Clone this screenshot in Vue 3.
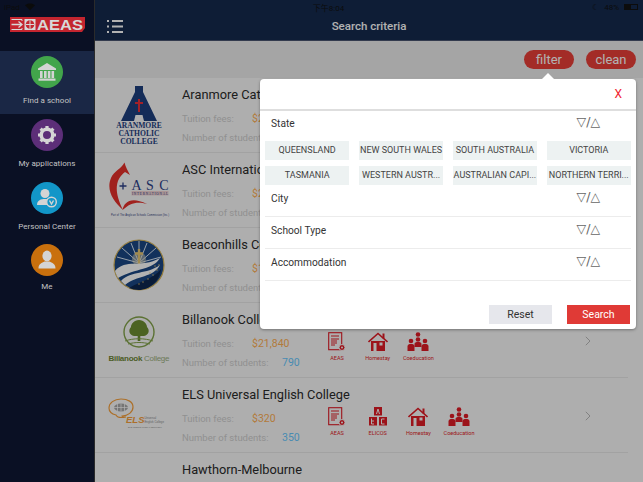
<script setup>
const nav = [
  { label: 'Find a school', color: '#42a54b', icon: 'bank', active: true },
  { label: 'My applications', color: '#5c2e78', icon: 'gear' },
  { label: 'Personal Center', color: '#1296c8', icon: 'person' },
  { label: 'Me', color: '#c9700d', icon: 'me', tight: true }
]
const schools = [
  { name: 'Aranmore Catholic College', logo: 'aranmore', fee: '$21,000', students: '1200', tags: ['AEAS', 'Homestay', 'Coeducation'] },
  { name: 'ASC International', logo: 'asc', fee: '$25,000', students: '640', tags: ['AEAS', 'Homestay', 'Coeducation'] },
  { name: 'Beaconhills College', logo: 'beacon', fee: '$18,500', students: '2900', tags: ['AEAS', 'Homestay', 'Coeducation'] },
  { name: 'Billanook College', logo: 'billanook', fee: '$21,840', students: '790', tags: ['AEAS', 'Homestay', 'Coeducation'] },
  { name: 'ELS Universal English College', logo: 'els', fee: '$320', students: '350', tags: ['AEAS', 'ELICOS', 'Homestay', 'Coeducation'] },
  { name: 'Hawthorn-Melbourne', logo: '', fee: '', students: '', tags: [] }
]
const states = ['QUEENSLAND', 'NEW SOUTH WALES', 'SOUTH AUSTRALIA', 'VICTORIA', 'TASMANIA', 'WESTERN AUSTR...', 'AUSTRALIAN CAPI...', 'NORTHERN TERRI...']
const criteria = ['City', 'School Type', 'Accommodation']
const dots = [[30, 43], [35, 40], [40, 36], [44, 31], [46, 26], [26, 45], [37, 34], [42, 27]]
</script>

<template>
  <div class="app">
    <aside class="side">
      <div class="brand">
        <svg width="75" height="15" viewBox="0 0 75 15">
          <path d="M0 0H75V11L72 15H0Z" fill="#c4252f" />
          <path d="M1.500 7.500H11M8.500 4.500L12 7.500L8.500 10.500" stroke="#d8d8d8" fill="none" stroke-width="1.300" />
          <path d="M1.500 2.500H12V4M1.500 12.500H12V11" stroke="#d8d8d8" fill="none" stroke-width="1" />
          <rect x="14.500" y="2" width="11" height="11" fill="#d8d8d8" />
          <circle cx="20" cy="7.500" r="4.300" fill="#c4252f" />
          <path d="M20 3.200V11.800M15.700 7.500H24.300" stroke="#d8d8d8" stroke-width="1" />
          <text x="27" y="12.800" class="brand-text" textLength="46" lengthAdjust="spacingAndGlyphs">AEAS</text>
        </svg>
      </div>
      <nav class="nav">
        <div v-for="n in nav" :key="n.label" class="nav-item" :class="{ active: n.active, tight: n.tight }">
          <div class="circle" :style="{ background: n.color }">
            <svg v-if="n.icon === 'bank'" width="20" height="20" viewBox="0 0 20 20" fill="#d4d4d4">
              <path d="M10 1L19 6.500V8H1V6.500Z" />
              <rect x="3" y="9" width="2.600" height="7" />
              <rect x="7" y="9" width="2.600" height="7" />
              <rect x="10.800" y="9" width="2.600" height="7" />
              <rect x="14.500" y="9" width="2.600" height="7" />
              <rect x="1.500" y="16.500" width="17" height="2.200" />
            </svg>
            <svg v-else-if="n.icon === 'gear'" width="20" height="20" viewBox="0 0 20 20">
              <circle cx="10" cy="10" r="5.800" fill="none" stroke="#d4d4d4" stroke-width="3.600" />
              <path d="M10 1V4M10 16V19M1 10H4M16 10H19M3.600 3.600L5.800 5.800M14.200 14.200L16.400 16.400M16.400 3.600L14.200 5.800M5.800 14.200L3.600 16.400" stroke="#d4d4d4" stroke-width="3.200" />
            </svg>
            <svg v-else-if="n.icon === 'person'" width="22" height="22" viewBox="0 0 22 22">
              <circle cx="9" cy="6.500" r="4.500" fill="#d4d4d4" />
              <path d="M1 18C1 13 5 12 9 12C11 12 12 12.500 12 13L12 18Z" fill="#d4d4d4" />
              <circle cx="15.500" cy="15" r="4.800" fill="#1296c8" stroke="#d4d4d4" stroke-width="1.400" />
              <path d="M13.500 13.500L15.500 17L17.500 13.500" fill="none" stroke="#d4d4d4" stroke-width="1.400" />
            </svg>
            <svg v-else width="20" height="20" viewBox="0 0 20 20" fill="#d4d4d4">
              <ellipse cx="10" cy="6" rx="4.600" ry="5.400" />
              <path d="M1.500 18.500C1.500 13.500 5 13 7.500 11.500H12.500C15 13 18.500 13.500 18.500 18.500Z" />
            </svg>
          </div>
          <span class="nav-label">{{ n.label }}</span>
        </div>
      </nav>
    </aside>

    <main class="main">
      <header class="top">
        <svg class="menu" width="16" height="14" viewBox="0 0 16 14" fill="#fff">
          <rect x="0" y="1" width="2" height="2" />
          <rect x="0" y="6.500" width="2" height="2" />
          <rect x="0" y="12" width="2" height="2" />
          <rect x="5" y="1" width="11" height="2" />
          <rect x="5" y="6.500" width="11" height="2" />
          <rect x="5" y="12" width="11" height="2" />
        </svg>
        <h1 class="title">Search criteria</h1>
      </header>
      <div class="actions">
        <span class="pill">filter</span>
        <span class="pill">clean</span>
      </div>
      <section class="list">
        <article v-for="s in schools" :key="s.name" class="row">
          <div class="logo">
            <svg v-if="s.logo === 'aranmore'" width="56" height="62" viewBox="0 0 56 62">
              <path d="M24 2H32V8L46 37H33L31.500 31H24.500L23 37H10L24 8Z" fill="#1e3f7f" />
              <rect x="23.500" y="15" width="9" height="16" fill="#1e3f7f" />
              <path d="M28 15V28M24 19H32" stroke="#e8303a" stroke-width="2" />
              <text x="28" y="44" class="serif">ARANMORE</text>
              <text x="28" y="52" class="serif">CATHOLIC</text>
              <text x="28" y="60" class="serif">COLLEGE</text>
            </svg>
            <svg v-else-if="s.logo === 'asc'" width="64" height="60" viewBox="0 0 64 60">
              <path d="M17.500 2.500C18.500 7 21 11 23 15L18 12C9 19 6 30 16 50C6 41 -1 30 4 18C7 11 14 9 17.500 2.500Z" fill="#e5302a" />
              <path d="M15.500 50C17 42 24 36 40 44C30 41 23 43 15.500 50Z" fill="#e5302a" />
              <path d="M12.500 26H19.500M16 22.500V29.500" stroke="#2c3f88" stroke-width="1.300" />
              <text x="24.500" y="29.500" class="asc" textLength="37">A S C</text>
              <rect x="24.500" y="31" width="37" height="4.500" fill="#f4d5d5" />
              <text x="43" y="34.800" class="asc-sub" textLength="36">INTERNATIONAL</text>
              <text x="33" y="55.500" class="asc-foot" textLength="58">Part of The Anglican Schools Commission (Inc.)</text>
            </svg>
            <svg v-else-if="s.logo === 'beacon'" width="52" height="52" viewBox="0 0 52 52">
              <circle cx="26" cy="26" r="25" fill="#1a4784" stroke="#d6b45a" stroke-width="1.200" />
              <path d="M26 24L4 18M26 24L9 9M26 24L18 4M26 24L26 2M26 24L34 4M26 24L43 9M26 24L48 18" stroke="#d7e4f2" stroke-width="1" />
              <circle cx="26" cy="20" r="7" fill="#e9dfc0" opacity=".5" />
              <path d="M26 10V25M22 14.500H30" stroke="#e6c673" stroke-width="2.400" />
              <path d="M2 32C13 19 27 30 47 19C40 31 23 29 5 39C4 37 3 35 2 32Z" fill="#fff" />
              <path d="M8 42C19 31 33 36 47 26C40 39 24 36 12 46Z" fill="#fff" />
              <path d="M16 49C28 42 40 40 48 30C47 42 36 51 26 51C22 51 19 50 16 49Z" fill="#0e2750" />
              <circle v-for="(d, i) in dots" :key="i" :cx="d[0]" :cy="d[1]" r=".7" fill="#e6c673" />
            </svg>
            <svg v-else-if="s.logo === 'billanook'" width="64" height="48" viewBox="0 0 64 48">
              <circle cx="32" cy="16" r="15" fill="none" stroke="#83a34a" stroke-width="1.400" />
              <path d="M32 4C37 4 40 8 40 11C43 14 42 19 37 20H27C22 19 21 14 24 11C24 8 27 4 32 4Z" fill="#6d8f31" />
              <rect x="30.700" y="18" width="2.600" height="7" fill="#6d8f31" />
              <path d="M18 25C26 22 38 22 46 25M21 28C28 26 36 26 43 28" stroke="#83a34a" fill="none" />
              <text x="32" y="45" class="bill" textLength="61">Billanook <tspan class="bill-b">College</tspan></text>
            </svg>
            <svg v-else-if="s.logo === 'els'" width="62" height="34" viewBox="0 0 62 34">
              <path d="M13 1C6 1 1 5 1 10C1 14 4 16 8 17C9 19 13 20 18 19C14 19 14 18 14 18C20 18 25 14 25 9C25 4 20 1 13 1Z" fill="none" stroke="#f6a03b" stroke-width="1.200" />
              <ellipse cx="13" cy="9.500" rx="7" ry="4" fill="#a8a8a8" />
              <path d="M6 9.500H20M13 5.500V13.500M9.500 6V13M16.500 6V13" stroke="#fff" stroke-width=".7" />
              <text x="18" y="25" class="els">ELS</text>
              <text x="36.500" y="21" class="els-sub">Universal</text>
              <text x="36.500" y="24.800" class="els-sub">English College</text>
              <text x="37" y="29.500" class="els-sub mid">ELS INTERNATIONAL NETWORK</text>
            </svg>
          </div>
          <div class="info">
            <h2 class="name">{{ s.name }}</h2>
            <template v-if="s.logo">
              <div class="meta first"><span class="key fee-key">Tuition fees:</span><span class="fee">{{ s.fee }}</span></div>
              <div class="meta"><span class="key num-key">Number of students:</span><span class="num">{{ s.students }}</span></div>
            </template>
          </div>
          <div v-if="s.logo" class="tags">
            <div v-for="t in s.tags" :key="t" class="tag">
              <svg v-if="t === 'AEAS'" width="18" height="20" viewBox="0 0 18 20">
                <rect x=".7" y=".7" width="13" height="17" fill="none" stroke="#e01c26" stroke-width="1.100" />
                <path d="M3 4H11M3 7H11M3 9H9M3 11H9M3 13H7" stroke="#e01c26" />
                <circle cx="14" cy="15.500" r="3" fill="#e01c26" stroke="#fafafa" />
                <circle cx="14" cy="15.500" r="1" fill="#fafafa" />
              </svg>
              <svg v-else-if="t === 'ELICOS'" width="20" height="20" viewBox="0 0 20 20">
                <rect x="6" y="0" width="8" height="8.500" fill="#e01c26" />
                <rect x="1" y="10" width="8" height="8.500" fill="#e01c26" />
                <rect x="11" y="10" width="8" height="8.500" fill="#e01c26" />
                <path d="M8.500 7L10 2L11.500 7M3.500 11.500V17H6M3.500 14H6M16.500 12H13.500V17H16.500" fill="none" stroke="#fafafa" />
              </svg>
              <svg v-else-if="t === 'Homestay'" width="20" height="20" viewBox="0 0 20 20">
                <path d="M3 9H17V19H3Z" fill="#e01c26" />
                <path d="M0.500 10L10 1.500L19.500 10" fill="none" stroke="#e01c26" stroke-width="1.600" />
                <rect x="14.500" y="1.500" width="2" height="5" fill="#e01c26" />
                <rect x="5.500" y="11" width="3" height="8" fill="#fafafa" />
                <rect x="11.500" y="10.500" width="3" height="3" fill="#fafafa" />
              </svg>
              <svg v-else width="22" height="20" viewBox="0 0 22 20" fill="#e01c26">
                <circle cx="11" cy="2.500" r="2.300" />
                <circle cx="4" cy="9" r="2.300" />
                <circle cx="11" cy="7.500" r="2.300" />
                <circle cx="18" cy="9" r="2.300" />
                <path d="M7.500 15V12C7.500 10.500 9 10 11 10C13 10 14.500 10.500 14.500 12V15Z" />
                <path d="M0.500 19V14.500C0.500 12.500 2 12 4 12C6 12 7.500 12.500 7.500 14.500V19Z" />
                <path d="M14.500 19V14.500C14.500 12.500 16 12 18 12C20 12 21.500 12.500 21.500 14.500V19Z" />
              </svg>
              <span class="tag-label">{{ t }}</span>
            </div>
          </div>
          <svg v-if="s.logo" class="chev" width="6" height="10" viewBox="0 0 6 10">
            <path d="M.8.800L5 5L.8 9.200" fill="none" stroke="#b9b9b9" stroke-width="1" />
          </svg>
        </article>
      </section>
    </main>

    <div class="dim"></div>

    <div class="status">
      <span>iPad</span>
      <svg width="10" height="8" viewBox="0 0 12 9">
        <path d="M6 8.500L0 2.500C3.500-.5 8.500-.5 12 2.500Z" fill="#0b0b0b" />
      </svg>
      <span class="clock">下午8:04</span>
      <span class="moon">☾</span>
      <span>48%</span>
      <span class="battery"><i></i></span>
    </div>

    <div class="modal">
      <span class="caret"></span>
      <div class="modal-head"><span class="close">X</span></div>
      <div class="modal-body">
        <div class="crit first">
          <span>State</span>
          <span class="arrows">▽/△</span>
        </div>
        <div class="chips">
          <span v-for="st in states" :key="st" class="chip">{{ st }}</span>
        </div>
        <div v-for="c in criteria" :key="c" class="crit">
          <span>{{ c }}</span>
          <span class="arrows">▽/△</span>
        </div>
      </div>
      <div class="modal-foot">
        <button class="btn reset">Reset</button>
        <button class="btn search">Search</button>
      </div>
    </div>
  </div>
</template>

<style>
html, body { margin: 0; padding: 0; }
</style>

<style scoped>
.app {
  position: relative;
  display: flex;
  width: 643px;
  height: 482px;
  overflow: hidden;
  font-family: Roboto, "Noto Sans CJK SC", sans-serif;
  background: #fafafa;
}
.side {
  position: relative;
  z-index: 1;
  flex: 0 0 94px;
  background: #0a1024;
  border-right: 1px solid #2b2b2b;
}
.brand {
  height: 51px;
  padding: 17px 0 0 10px;
  box-sizing: border-box;
}
.brand svg { display: block; }
.brand-text {
  font: 700 14px "Liberation Sans", sans-serif;
  fill: #d8d8d8;
}
.nav-item {
  height: 63px;
  padding-top: 5px;
  box-sizing: border-box;
  display: flex;
  flex-direction: column;
  align-items: center;
}
.nav-item.active { background: #1a2745; }
.nav-item.tight { padding-top: 4px; }
.circle {
  width: 32px;
  height: 32px;
  flex: none;
  border-radius: 50%;
  display: flex;
  align-items: center;
  justify-content: center;
}
.nav-label {
  margin-top: 7px;
  font-size: 8px;
  letter-spacing: .05px;
  line-height: 12px;
  color: #c4c4c4;
  white-space: nowrap;
}
.tight .nav-label { margin-top: 5px; }
.main {
  flex: 1;
  min-width: 0;
  display: flex;
  flex-direction: column;
}
.top {
  position: relative;
  flex: 0 0 41px;
  box-sizing: border-box;
  background: #152a4e;
  border-bottom: 1px solid #4a5570;
  display: flex;
  align-items: center;
  justify-content: center;
  padding-top: 12px;
}
.menu {
  position: absolute;
  left: 12px;
  top: 19px;
}
.title {
  margin: 0;
  font-size: 11.500px;
  font-weight: 500;
  color: #fff;
}
.actions {
  flex: 0 0 37px;
  background: #ededed;
  display: flex;
  justify-content: flex-end;
  align-items: flex-start;
  gap: 12px;
  padding: 9px 7px 0 0;
  box-sizing: border-box;
}
.pill {
  width: 50px;
  height: 19px;
  border-radius: 10px;
  background: #ea3f38;
  color: #fff;
  font-size: 13px;
  line-height: 19px;
  text-align: center;
}
.list { flex: 1; min-height: 0; }
.row {
  position: relative;
  height: 75px;
  display: flex;
  box-sizing: border-box;
  margin-right: 15px;
  border-bottom: 1px solid #e8e8e8;
}
.logo {
  flex: 0 0 87px;
  display: flex;
  align-items: center;
  justify-content: center;
}
.logo svg { display: block; }
.serif {
  font: 700 7.600px "Liberation Serif", serif;
  fill: #1e3f7f;
  text-anchor: middle;
}
.asc { font: 14px "Liberation Serif", serif; fill: #2c3f88; }
.asc-sub { font: 3.400px "Liberation Serif", serif; fill: #2c3f88; text-anchor: middle; }
.asc-foot { font: 2.600px "Liberation Sans", sans-serif; fill: #30407a; text-anchor: middle; }
.bill { font: 700 8px "Liberation Sans", sans-serif; fill: #6d8537; text-anchor: middle; }
.bill-b { font-weight: 400; fill: #9bb080; }
.els { font: italic 700 9.500px "Liberation Sans", sans-serif; fill: #f6a03b; }
.els-sub { font: 2.800px "Liberation Sans", sans-serif; fill: #8a8a8a; }
.mid { text-anchor: middle; font-size: 2.200px; }
.info {
  flex: 0 0 auto;
  width: 140px;
  padding-top: 7px;
  white-space: nowrap;
}
.name {
  margin: 0;
  font-size: 12.800px;
  font-weight: 400;
  line-height: 19px;
  color: #2b2b2b;
}
.meta {
  display: flex;
  height: 19px;
  font-size: 9.500px;
  line-height: 19px;
}
.meta.first { margin-top: 5px; }
.key { color: #cfcfcf; }
.fee-key { width: 70px; }
.num-key { width: 100px; }
.fee { color: #ffaf55; font-size: 10.500px; }
.num { color: #68c8ff; font-size: 10.500px; }
.tags {
  display: flex;
  gap: 10.700px;
  padding: 29px 0 0 0;
}
.tag {
  width: 30px;
  display: flex;
  flex-direction: column;
  align-items: center;
}
.tag svg { display: block; }
.tag-label {
  margin-top: 3px;
  font-size: 5.500px;
  line-height: 7px;
  color: #e01c26;
  white-space: nowrap;
}
.chev {
  position: absolute;
  right: 37px;
  top: 33px;
}
.status {
  position: absolute;
  z-index: 2;
  left: 0;
  top: 0;
  width: 643px;
  height: 14px;
  display: flex;
  align-items: center;
  gap: 5px;
  padding: 0 4px;
  box-sizing: border-box;
  font-size: 8px;
  color: #0c0c0c;
}
.clock { margin-left: 273px; }
.moon { margin-left: auto; }
.battery {
  width: 14px;
  height: 6px;
  border: 1px solid #0c0c0c;
  box-sizing: border-box;
  margin-right: 1px;
}
.battery i {
  display: block;
  width: 6px;
  height: 100%;
  background: #0c0c0c;
}
.dim {
  position: absolute;
  inset: 0;
  background: rgba(0, 0, 0, .3);
}
.modal {
  position: absolute;
  z-index: 3;
  left: 260px;
  top: 79px;
  width: 376px;
  height: 250px;
  background: #fff;
  border-radius: 4px;
  box-shadow: 0 1px 3px rgba(0, 0, 0, .35);
  display: flex;
  flex-direction: column;
}
.caret {
  position: absolute;
  left: 282px;
  top: -6px;
  width: 0;
  height: 0;
  border: 6px solid transparent;
  border-top: 0;
  border-bottom: 6px solid #fff;
}
.modal-head {
  flex: 0 0 32px;
  box-sizing: border-box;
  border-bottom: 2px solid #dedede;
  display: flex;
  justify-content: flex-end;
  align-items: center;
  padding: 0 14px 0 0;
}
.close {
  color: #f0252f;
  font-size: 12px;
}
.modal-body { padding: 0 5px; }
.crit {
  display: flex;
  justify-content: space-between;
  height: 32px;
  box-sizing: border-box;
  padding: 0 31px 0 6px;
  font-size: 10.200px;
  line-height: 27px;
  color: #333;
  border-bottom: 1px solid #ececec;
}
.crit.first {
  height: 30px;
  line-height: 25px;
  border-bottom: 0;
}
.arrows {
  font-family: "DejaVu Sans", sans-serif;
  font-size: 12.500px;
  margin-top: -2px;
  color: #666;
}
.chips {
  display: grid;
  grid-template-columns: repeat(4, 1fr);
  gap: 6px 9.500px;
}
.chip {
  height: 19px;
  background: #edf2f2;
  color: #444;
  font-size: 9px;
  line-height: 19px;
  text-align: center;
  white-space: nowrap;
  overflow: hidden;
}
.modal-foot {
  margin-top: auto;
  padding: 0 6px 5px 0;
  display: flex;
  justify-content: flex-end;
  gap: 15px;
}
.btn {
  width: 63px;
  height: 19px;
  border: 0;
  padding: 0;
  font: 10.500px Roboto, sans-serif;
}
.reset { background: #e6e7ec; color: #333; }
.search { background: #e03a36; color: #fff; }
</style>
